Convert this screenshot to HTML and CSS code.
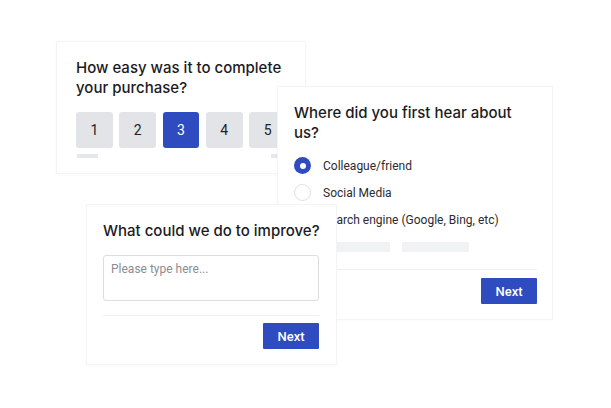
FILE: index.html
```html
<!DOCTYPE html>
<html>
<head>
<meta charset="utf-8">
<link rel="stylesheet" href="styles.css">
</head>
<body>
<div class="canvas">
  <section class="card card-rate">
    <h2 class="q">How easy was it to complete<br>your purchase?</h2>
    <div class="scale">
      <span class="num">1</span>
      <span class="num">2</span>
      <span class="num num-on">3</span>
      <span class="num">4</span>
      <span class="num">5</span>
    </div>
    <div class="scale-labels">
      <span class="tick"></span>
      <span class="tick"></span>
    </div>
  </section>

  <section class="card card-source">
    <h2 class="q">Where did you first hear about<br>us?</h2>
    <ul class="options">
      <li class="opt"><span class="radio radio-on"></span>Colleague/friend</li>
      <li class="opt"><span class="radio"></span>Social Media</li>
      <li class="opt"><span class="radio"></span>Search engine (Google, Bing, etc)</li>
    </ul>
    <div class="ghosts">
      <span class="ghost"></span>
      <span class="ghost"></span>
    </div>
    <div class="foot">
      <button class="next">Next</button>
    </div>
  </section>

  <section class="card card-improve">
    <h2 class="q">What could we do to improve?</h2>
    <div class="field">Please type here...</div>
    <div class="foot foot-tight">
      <button class="next">Next</button>
    </div>
  </section>
</div>
</body>
</html>
```

FILE: styles.css
```css
* { box-sizing: border-box; }
html, body { margin: 0; padding: 0; background: #ffffff; }
body { width: 611px; height: 408px; overflow: hidden; font-family: Roboto, "Liberation Sans", sans-serif; }

.canvas { position: relative; width: 611px; height: 408px; }

.card {
  position: absolute;
  background: #ffffff;
  border: 1px solid #f3f4f6;
  box-shadow: 0 1px 4px rgba(20, 30, 60, 0.025);
  display: flex;
  flex-direction: column;
}

.q {
  margin: 0;
  font-family: Inter, "Noto Sans", sans-serif;
  font-weight: 500;
  font-size: 15px;
  line-height: 20px;
  color: #1b1b1f;
  letter-spacing: 0;
  white-space: nowrap;
}

/* card 1 */
.card-rate { left: 56px; top: 41px; width: 250px; height: 133px; padding: 16px 19px; z-index: 1; }
.scale { display: flex; gap: 6.5px; margin-top: 14px; }
.num {
  width: 38px; height: 36px; border-radius: 3px;
  background: #e3e4e8; color: #222226;
  display: flex; align-items: center; justify-content: center;
  font-size: 14px;
}
.num-on { background: #2f4bc0; color: #ffffff; }
.scale-labels { display: flex; justify-content: space-between; width: 216px; margin-top: 6px; padding-left: 1px; }
.tick { width: 21px; height: 4px; background: #e6e7eb; border-radius: 1px; }

/* card 2 */
.card-source { left: 277px; top: 86px; width: 276px; height: 234px; padding: 16px 15px 15px 16px; z-index: 2; }
.options { list-style: none; margin: 9px 0 0; padding: 0; }
.opt { height: 27px; display: flex; align-items: center; gap: 12px; font-size: 12px; color: #2b2b30; }
.radio { width: 17px; height: 17px; border-radius: 50%; border: 1.5px solid #dedfe3; flex: none; }
.radio-on { border: none; background: #2f4bc0; display: flex; align-items: center; justify-content: center; }
.radio-on::after { content: ""; width: 6px; height: 6px; border-radius: 50%; background: #ffffff; }
.ghosts { display: flex; gap: 12px; margin-top: 9px; padding-left: 29px; }
.ghost { width: 67px; height: 10px; background: #f1f2f4; }

.foot { margin-top: 17px; padding-top: 8px; border-top: 1px solid #eeeff2; display: flex; justify-content: flex-end; }
.foot-tight { margin-top: 14px; padding-top: 7px; }
.next {
  width: 56px; height: 26px; border: none; border-radius: 1px;
  background: #2f4bc0; color: #ffffff;
  font-family: Roboto, "Liberation Sans", sans-serif; font-weight: 500; font-size: 13px;
  padding: 0;
}

/* card 3 */
.card-improve { left: 86px; top: 204px; width: 251px; height: 161px; padding: 16px 17px 15px 16px; z-index: 3; }
.field {
  margin-top: 14px; height: 47px;
  border: 1px solid #dcdde1; border-radius: 3px;
  padding: 6px 7px;
  font-size: 12px; color: #8b8c92;
}
```
